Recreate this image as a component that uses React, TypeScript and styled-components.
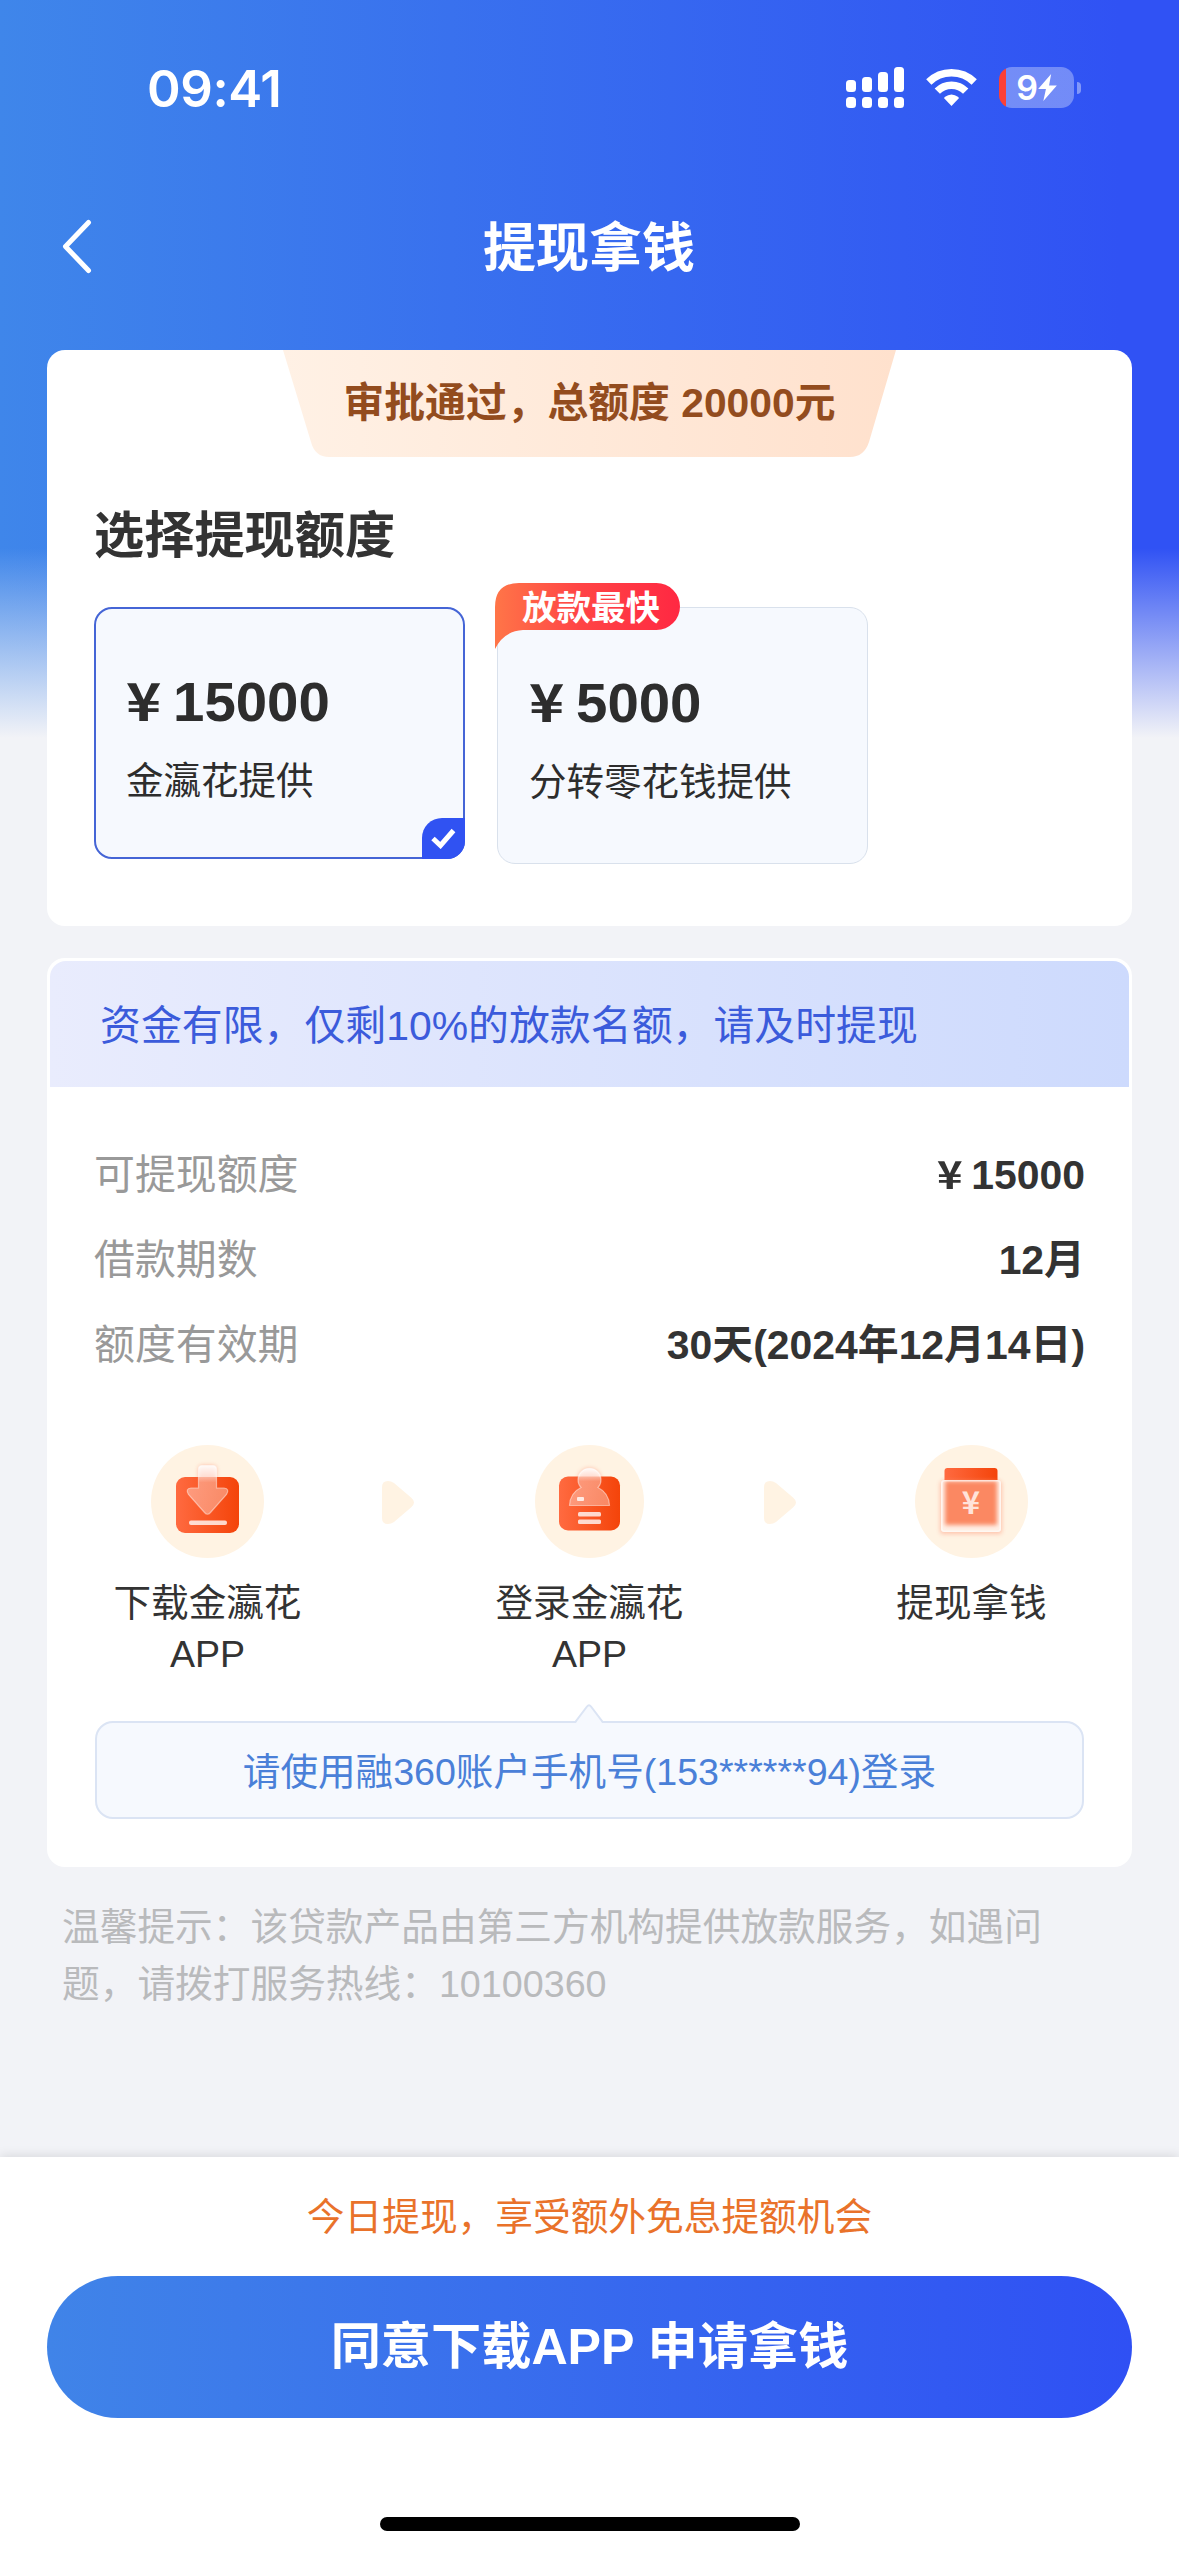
import React from "react";
import styled, { createGlobalStyle } from "styled-components";

const GlobalStyle = createGlobalStyle`
  * { box-sizing: border-box; }
  body {
    margin: 0;
    background: #f2f3f7;
    font-family: "Liberation Sans", "Noto Sans CJK SC", sans-serif;
    color: #333;
  }
`;

const Page = styled.div`
  width: 1179px;
  height: 2556px;
  display: flex;
  flex-direction: column;
  overflow: hidden;
  background:
    linear-gradient(to bottom, rgba(242, 243, 247, 0) 548px, rgba(242, 243, 247, 0.55) 652px, #f2f3f7 738px),
    linear-gradient(to right, #3f86ea 0%, #3052f4 95%);
`;

const StatusBar = styled.header`
  height: 176px;
  display: flex;
  justify-content: space-between;
  align-items: flex-start;
  padding: 59px 98px 0 147px;
`;

const Clock = styled.span`
  font: 560 51px/60px Inter, sans-serif;
  letter-spacing: -0.4px;
  color: #fff;
`;

const StatusIcons = styled.div`
  display: flex;
  align-items: center;
  height: 41px;
  margin-top: 8px;
`;

const SignalIcon = styled.svg`
  width: 58px;
  height: 41px;
  margin-right: 22px;
`;

const WifiIcon = styled.svg`
  width: 51px;
  height: 41px;
  margin-right: 22px;
`;

const Battery = styled.div`
  display: flex;
  align-items: center;
  justify-content: center;
  width: 75px;
  height: 41px;
  border-radius: 13px;
  color: #fff;
  font: 600 34px/41px Inter, sans-serif;
  background: linear-gradient(to right, #fb4036 7px, rgba(255, 255, 255, 0.32) 7px);
`;

const Bolt = styled.svg`
  width: 19px;
  height: 27px;
`;

const BatteryTip = styled.div`
  width: 4px;
  height: 12px;
  margin-left: 3px;
  border-radius: 0 4px 4px 0;
  background: rgba(255, 255, 255, 0.4);
`;

const NavBar = styled.nav`
  height: 142px;
  margin-bottom: 32px;
  display: grid;
  grid-template-columns: 160px 1fr 161px;
  align-items: center;
`;

const BackIcon = styled.svg`
  width: 32px;
  height: 56px;
  margin-left: 61px;
`;

const Title = styled.h1`
  margin: 0;
  padding-top: 4px;
  text-align: center;
  font-size: 53px;
  line-height: 70px;
  font-weight: 700;
  color: #fff;
`;

const Card = styled.section<{ $height: number; $gap?: number }>`
  height: ${(p) => p.$height}px;
  margin: ${(p) => p.$gap ?? 0}px 47px 0;
  border-radius: 18px;
  background: #fff;
  display: flex;
  flex-direction: column;
`;

const Ribbon = styled.div`
  align-self: center;
  width: 613px;
  height: 107px;
  clip-path: path("M0 0H613L586 92Q581 107 567 107H46Q32 107 28 92Z");
  background: linear-gradient(to right, #fff1e5, #ffe1cd);
  text-align: center;
  font-size: 40.8px;
  line-height: 106px;
  font-weight: 700;
  color: #934c1e;
`;

const SectionTitle = styled.h2`
  margin: 46px 0 0 47px;
  font-size: 50.2px;
  line-height: 66px;
  font-weight: 700;
`;

const Options = styled.div`
  display: flex;
  align-items: flex-start;
  gap: 32px;
  padding: 38px 47px 0;
`;

const Option = styled.div<{ $selected?: boolean }>`
  position: relative;
  width: 371px;
  height: ${(p) => (p.$selected ? 252 : 257)}px;
  padding: ${(p) => (p.$selected ? "60px 0 0 30px" : "62px 0 0 31px")};
  border: ${(p) => (p.$selected ? "2px solid #4565d6" : "1px solid #d9e1ec")};
  border-radius: 18px;
  background: #f6f9fe;
`;

const Amount = styled.div`
  font-size: 56.4px;
  line-height: 66px;
  font-weight: 700;
  color: #2d2d2d;
`;

const Yen = styled.span`
  display: inline-block;
  width: 0.834em;
  line-height: 1;

  > span {
    display: inline-block;
    font-family: "Noto Sans CJK SC", sans-serif;
    font-size: 0.93em;
    line-height: 1;
    transform: scaleX(1.14);
    transform-origin: left;
  }
`;

const Provider = styled.div`
  margin-top: 21px;
  font-size: 37.5px;
  line-height: 50px;
  color: #2d2d2d;
`;

const CheckMark = styled.div`
  position: absolute;
  right: -2px;
  bottom: -2px;
  width: 43px;
  height: 41px;
  border-radius: 20px 0 18px 0;
  background: #3052f2;
  display: flex;
  align-items: center;
  justify-content: center;
`;

const FastBadge = styled.div`
  position: absolute;
  left: -3px;
  top: -25px;
  width: 185px;
  height: 66px;
  padding-left: 27px;
  clip-path: path("M0 24Q0 0 24 0H161.5A23.5 23.5 0 0 1 161.5 47H28Q9 48 0 66Z");
  background: linear-gradient(to right, #ff7548, #ff4545 45%, #ff2842);
  font-size: 34.5px;
  line-height: 51px;
  font-weight: 700;
  color: #fff;
`;

const Banner = styled.div`
  height: 126px;
  margin: 3px 3px 0;
  padding-left: 50px;
  border-radius: 16px 16px 0 0;
  background: linear-gradient(to right, #e9ecfd, #cddafd);
  font-size: 40.9px;
  line-height: 130px;
  color: #3b5bdb;
`;

const Details = styled.dl`
  margin: 45px 47px 0;
`;

const DetailRow = styled.div`
  height: 85px;
  display: flex;
  align-items: center;
  justify-content: space-between;
  font-size: 40.9px;
  line-height: 54px;
`;

const DetailLabel = styled.dt`
  color: #999;
`;

const DetailValue = styled.dd`
  margin: 0;
  font-weight: 700;
`;

const Steps = styled.div`
  display: flex;
  justify-content: space-between;
  height: 276px;
  margin: 58px 49px 0;
`;

const Step = styled.div`
  width: 223px;
  display: flex;
  flex-direction: column;
  align-items: center;
  text-align: center;
  font-size: 37.6px;
  line-height: 51px;
`;

const StepIcon = styled.svg<{ $width?: number }>`
  width: ${(p) => p.$width ?? 113}px;
  height: 113px;
  margin-bottom: 20px;
`;

const StepArrow = styled.svg`
  width: 32px;
  height: 43px;
  margin: 36px 1px 0 -1px;
`;

const LoginTip = styled.div`
  position: relative;
  height: 98px;
  margin: 0 48px;
  border: 2px solid #dbe4f4;
  border-radius: 18px;
  background: #f6f9fe;
  text-align: center;
  font-size: 37.6px;
  line-height: 99px;
  color: #4a80d8;
`;

const TipPointer = styled.svg`
  position: absolute;
  left: 478px;
  top: -19px;
  width: 28px;
  height: 20px;
`;

const Notice = styled.p`
  flex: 1;
  width: 1062px;
  margin: 0;
  padding: 32px 20px 0 62px;
  font-size: 37.7px;
  line-height: 57px;
  color: #b9babc;
`;

const Footer = styled.footer`
  height: 399px;
  display: flex;
  flex-direction: column;
  align-items: center;
  background: #fff;
  box-shadow: 0 -2px 10px rgba(0, 0, 0, 0.1);
`;

const Promo = styled.div`
  margin-top: 34px;
  font-size: 37.7px;
  line-height: 52px;
  color: #e9722a;
`;

const ApplyButton = styled.button`
  width: 1085px;
  height: 142px;
  margin-top: 33px;
  padding: 0;
  border: 0;
  border-radius: 71px;
  background: linear-gradient(to right, #4084e8, #2f50f4);
  font-family: inherit;
  font-size: 50.2px;
  line-height: 142px;
  font-weight: 700;
  color: #fff;
`;

const HomeIndicator = styled.div`
  width: 420px;
  height: 14px;
  margin-top: 99px;
  border-radius: 7px;
  background: #000;
`;

const HiddenDefs = styled.svg`
  display: block;
  width: 0;
  height: 0;
`;

function Money({ value }: { value: number }) {
  return (
    <>
      <Yen>
        <span>¥</span>
      </Yen>
      {value}
    </>
  );
}

const details = [
  { label: "可提现额度", value: <Money value={15000} /> },
  { label: "借款期数", value: "12月" },
  { label: "额度有效期", value: "30天(2024年12月14日)" },
];

function Signal() {
  const tops = [13, 10, 5, 0];
  return (
    <SignalIcon viewBox="0 0 58 41" fill="#fff">
      {tops.map((top, i) => (
        <g key={i}>
          <rect x={i * 16} y={top} width="10" height={25 - top} rx="3.5" />
          <rect x={i * 16} y="30" width="10" height="11" rx="3.5" />
        </g>
      ))}
    </SignalIcon>
  );
}

function Wifi() {
  return (
    <WifiIcon viewBox="0 0 51 41">
      <g fill="none" stroke="#fff" strokeWidth="7.5">
        <path d="M2.8 15A32.5 32.5 0 0 1 48.2 15" />
        <path d="M11.3 24.2A20 20 0 0 1 39.7 24.2" />
      </g>
      <path d="M25.5 39L18.4 31.4Q18 30.6 18.7 30Q25.5 25 32.3 30Q33 30.6 32.6 31.4Z" fill="#fff" />
    </WifiIcon>
  );
}

function Arrow() {
  return (
    <StepArrow viewBox="0 0 32 43">
      <path d="M0 6Q0 0 6 0Q9 0 12 2L29 16.500Q35 21.500 29 26.500L12 41Q9 43 6 43Q0 43 0 37Z" fill="#fff3e3" />
    </StepArrow>
  );
}

function IconDefs() {
  return (
    <HiddenDefs>
      <defs>
        <linearGradient id="tile" x1="0" x2="1" y1="0" y2="0">
          <stop offset="0" stopColor="#ff6a40" />
          <stop offset="1" stopColor="#f4440a" />
        </linearGradient>
        <linearGradient id="glass" x1="0" x2="0" y1="0" y2="1">
          <stop offset="0" stopColor="#fff" stopOpacity="0.9" />
          <stop offset="0.2" stopColor="#fff" stopOpacity="0.6" />
          <stop offset="0.35" stopColor="#fff" stopOpacity="0.36" />
          <stop offset="1" stopColor="#fff" stopOpacity="0.34" />
        </linearGradient>
        <filter id="glow" x="-30%" y="-30%" width="160%" height="160%">
          <feGaussianBlur stdDeviation="2" />
        </filter>
        <filter id="soft" x="-20%" y="-20%" width="140%" height="140%">
          <feGaussianBlur stdDeviation="2.2" />
        </filter>
      </defs>
    </HiddenDefs>
  );
}

const arrowShape =
  "M47.500 24Q47.500 20.500 51 20.500H62Q65.500 20.500 65.500 24V43H73Q79 43.500 75.500 49.500L59.500 67.500Q56.500 71 53.500 67.500L37.500 49.500Q34 43.500 40 43H47.500Z";
const personShape =
  "M46 42.500A11.500 11.500 0 1 1 63 42.500Q74 48 74.500 60.500H34.500Q35 48 46 42.500Z";

function DownloadIcon() {
  return (
    <StepIcon viewBox="0 0 113 113">
      <circle cx="56.500" cy="56.500" r="56.500" fill="#fff3e3" />
      <path d={arrowShape} fill="#ff8a6c" opacity="0.6" filter="url(#glow)" />
      <rect x="25" y="32" width="63" height="56" rx="9" fill="url(#tile)" />
      <path d={arrowShape} fill="url(#glass)" stroke="#fff" strokeOpacity="0.45" strokeWidth="1.2" />
      <rect x="38" y="75.500" width="38" height="4.500" rx="2" fill="#fff" fillOpacity="0.78" />
    </StepIcon>
  );
}

function LoginIcon() {
  return (
    <StepIcon viewBox="0 0 109 113" $width={109} preserveAspectRatio="none">
      <ellipse cx="54.500" cy="56.500" rx="54.500" ry="56.500" fill="#fff3e3" />
      <path d={personShape} fill="#ff8a6c" opacity="0.6" filter="url(#glow)" />
      <rect x="24" y="31.500" width="61" height="54" rx="9" fill="url(#tile)" />
      <path d={personShape} fill="url(#glass)" stroke="#fff" strokeOpacity="0.45" strokeWidth="1.2" />
      <rect x="42" y="52" width="7" height="4" rx="1" fill="#fff" fillOpacity="0.8" />
      <rect x="43" y="67" width="23" height="4.500" rx="1.500" fill="#fff" fillOpacity="0.78" />
      <rect x="43" y="74.500" width="23" height="4.500" rx="1.500" fill="#fff" fillOpacity="0.78" />
    </StepIcon>
  );
}

function CashIcon() {
  return (
    <StepIcon viewBox="0 0 113 113">
      <circle cx="56.500" cy="56.500" r="56.500" fill="#fff3e3" />
      <rect x="25" y="36" width="62" height="53" rx="3" fill="#ff8a6c" opacity="0.45" filter="url(#glow)" />
      <path d="M29.500 36V26Q29.500 23 32.500 23H79.500Q82.500 23 82.500 26V36Z" fill="url(#tile)" />
      <rect x="26" y="35" width="60" height="52" rx="3" fill="#fff0e6" />
      <g filter="url(#soft)">
        <rect x="30" y="36" width="52" height="44" fill="#fb8862" />
      </g>
      <rect x="26.800" y="35.800" width="58.400" height="50.400" rx="2.500" fill="none" stroke="#fff" strokeOpacity="0.5" strokeWidth="1.6" />
      <text x="56" y="69" textAnchor="middle" fontFamily="Noto Sans CJK SC, sans-serif" fontWeight="700" fontSize="31" fill="#ffe3da">
        ¥
      </text>
    </StepIcon>
  );
}

export default function App() {
  return (
    <Page>
      <GlobalStyle />
      <IconDefs />
      <StatusBar>
        <Clock>09:41</Clock>
        <StatusIcons>
          <Signal />
          <Wifi />
          <Battery>
            9
            <Bolt viewBox="0 0 18 26">
              <path d="M12.500 0L0 14.500H7.500L5 26L18 11H10.500Z" fill="#fff" />
            </Bolt>
          </Battery>
          <BatteryTip />
        </StatusIcons>
      </StatusBar>

      <NavBar>
        <BackIcon viewBox="0 0 32 56">
          <path d="M27.500 3.500L4.500 27.500L27.500 51.500" fill="none" stroke="#fff" strokeWidth="5" strokeLinecap="round" strokeLinejoin="round" />
        </BackIcon>
        <Title>提现拿钱</Title>
      </NavBar>

      <Card $height={576}>
        <Ribbon>审批通过，总额度 20000元</Ribbon>
        <SectionTitle>选择提现额度</SectionTitle>
        <Options>
          <Option $selected>
            <Amount>
              <Money value={15000} />
            </Amount>
            <Provider>金瀛花提供</Provider>
            <CheckMark>
              <svg width="25" height="21" viewBox="0 0 25 21">
                <path d="M2 10.500L9.500 17.500L22.500 2.500" fill="none" stroke="#fff" strokeWidth="5" />
              </svg>
            </CheckMark>
          </Option>
          <Option>
            <Amount>
              <Money value={5000} />
            </Amount>
            <Provider>分转零花钱提供</Provider>
            <FastBadge>放款最快</FastBadge>
          </Option>
        </Options>
      </Card>

      <Card $height={909} $gap={32}>
        <Banner>资金有限，仅剩10%的放款名额，请及时提现</Banner>
        <Details>
          {details.map((row) => (
            <DetailRow key={row.label}>
              <DetailLabel>{row.label}</DetailLabel>
              <DetailValue>{row.value}</DetailValue>
            </DetailRow>
          ))}
        </Details>
        <Steps>
          <Step>
            <DownloadIcon />
            下载金瀛花
            <br />
            APP
          </Step>
          <Arrow />
          <Step>
            <LoginIcon />
            登录金瀛花
            <br />
            APP
          </Step>
          <Arrow />
          <Step>
            <CashIcon />
            提现拿钱
          </Step>
        </Steps>
        <LoginTip>
          请使用融360账户手机号(153******94)登录
          <TipPointer viewBox="0 0 28 20">
            <path d="M0 20L12 2.500Q14 0 16 2.500L28 20Z" fill="#f6f9fe" />
            <path d="M0 18.500L12 2.500Q14 0 16 2.500L28 18.500" fill="none" stroke="#dbe4f4" strokeWidth="2" />
          </TipPointer>
        </LoginTip>
      </Card>

      <Notice>温馨提示：该贷款产品由第三方机构提供放款服务，如遇问题，请拨打服务热线：10100360</Notice>

      <Footer>
        <Promo>今日提现，享受额外免息提额机会</Promo>
        <ApplyButton>同意下载APP 申请拿钱</ApplyButton>
        <HomeIndicator />
      </Footer>
    </Page>
  );
}
